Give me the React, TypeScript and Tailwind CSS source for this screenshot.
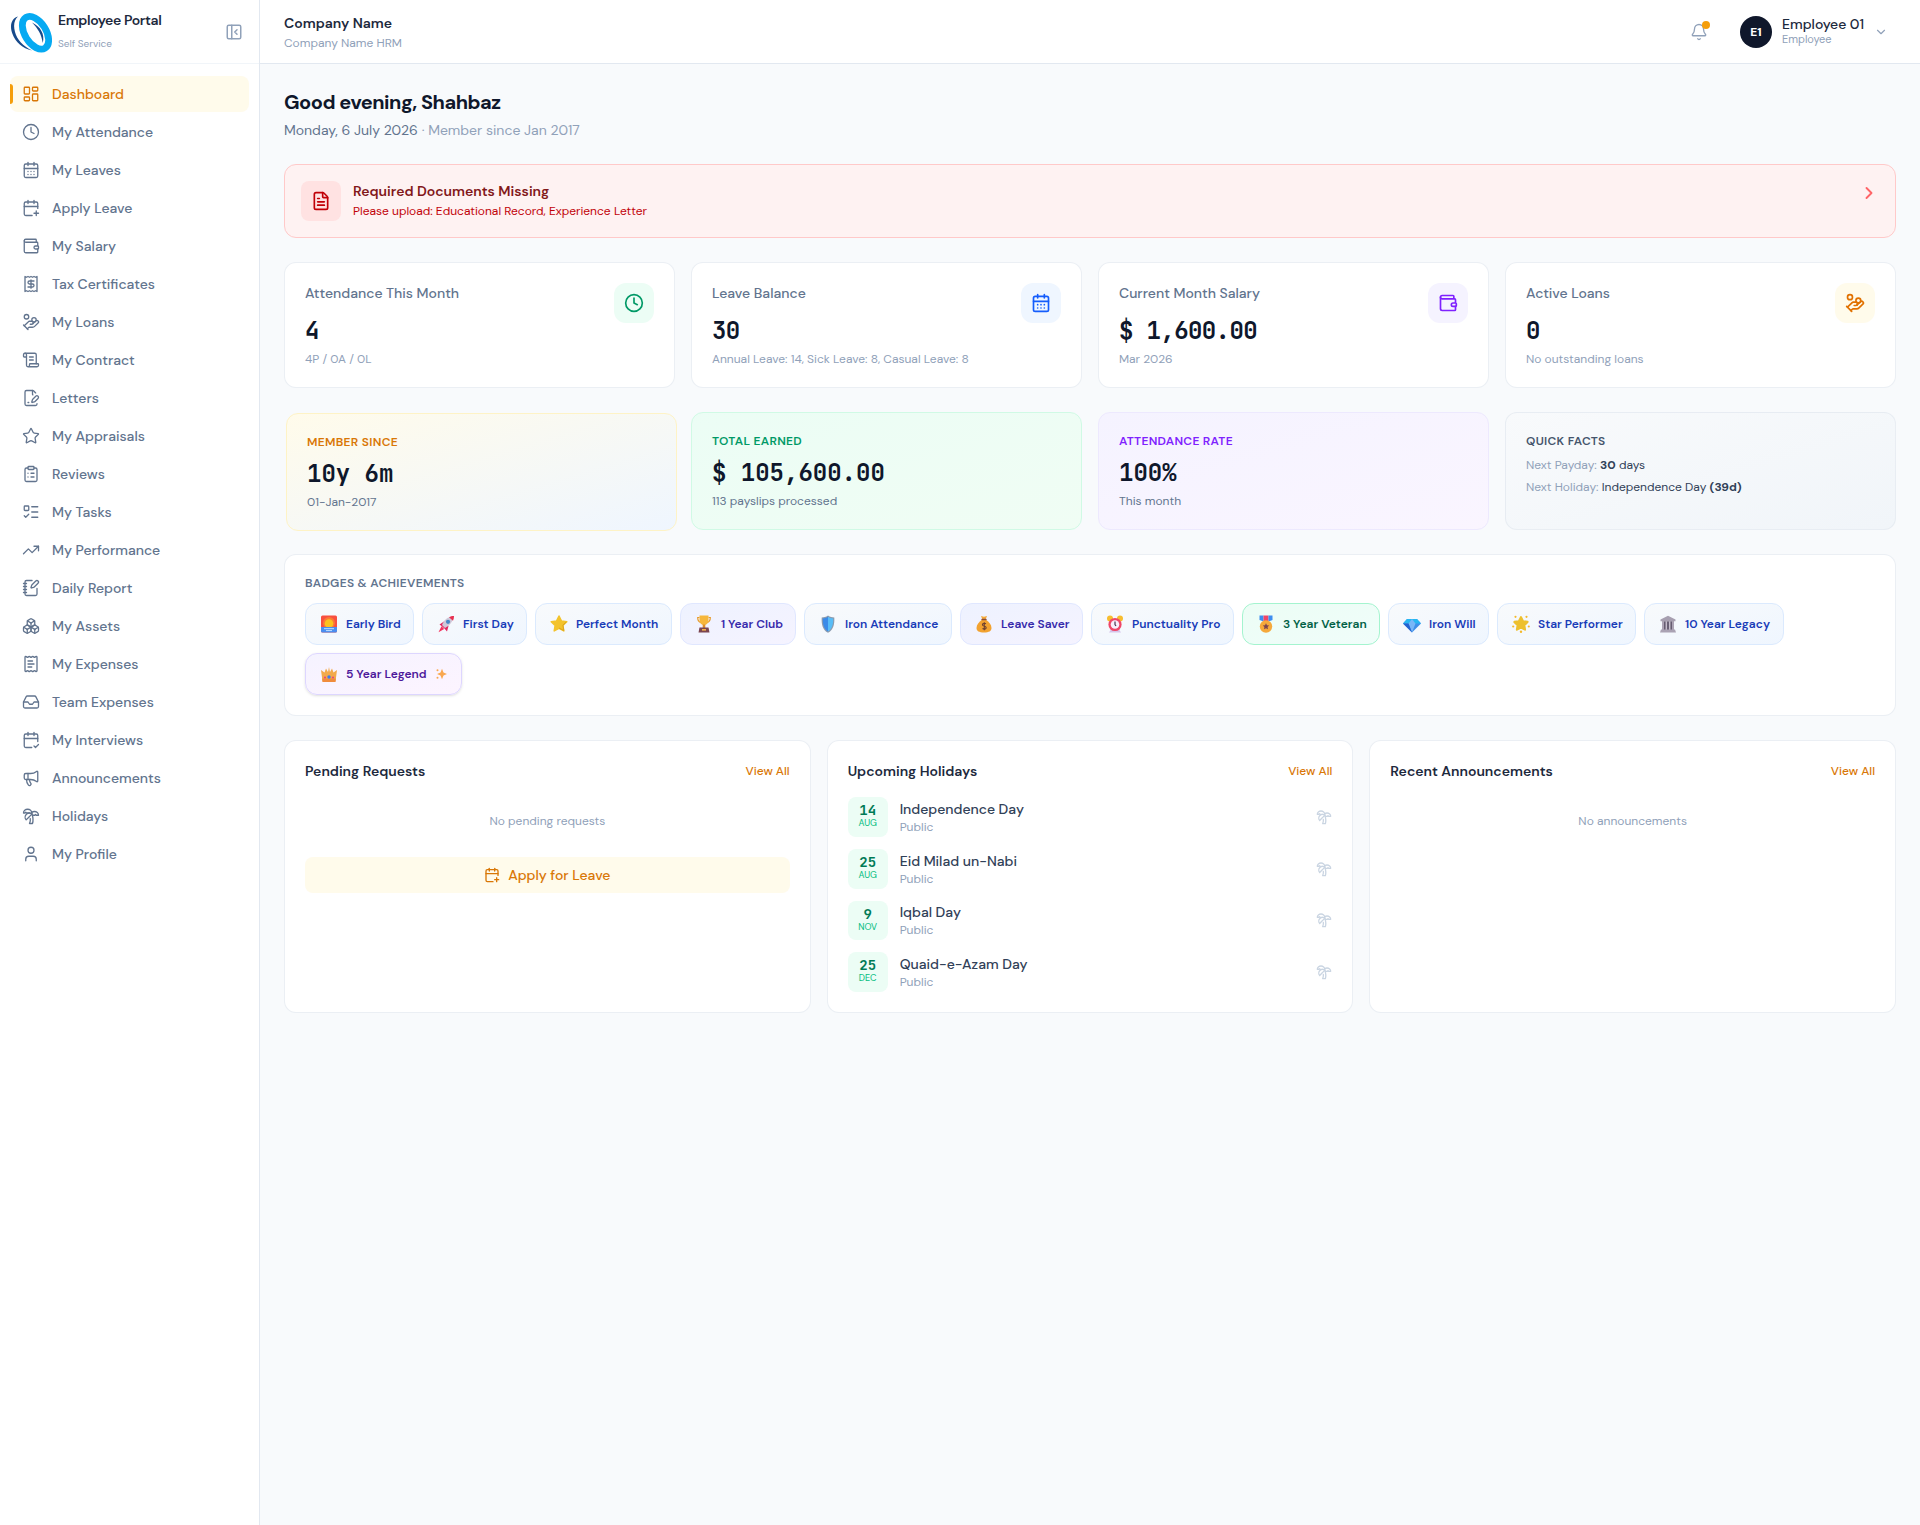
import React from "react";
import {
  Bell,
  Boxes,
  CalendarCheck2,
  CalendarDays,
  CalendarPlus,
  ChevronDown,
  ChevronRight,
  ClipboardList,
  Clock,
  FileText,
  HandCoins,
  Inbox,
  LayoutDashboard,
  ListTodo,
  Megaphone,
  NotebookPen,
  PanelLeftClose,
  Receipt,
  ReceiptText,
  ScrollText,
  Star,
  TreePalm,
  TrendingUp,
  User,
  Wallet,
} from "lucide-react";

const FileSignature = ({
  size = 24,
  strokeWidth = 2,
  className,
}: {
  size?: number;
  strokeWidth?: number;
  className?: string;
}) => (
  <svg
    width={size}
    height={size}
    viewBox="0 0 24 24"
    fill="none"
    stroke="currentColor"
    strokeWidth={strokeWidth}
    strokeLinecap="round"
    strokeLinejoin="round"
    className={className}
  >
    <path d="M14.364 13.634a2 2 0 0 0-.506.854l-.837 2.87a.5.5 0 0 0 .62.62l2.87-.837a2 2 0 0 0 .854-.506l4.013-4.009a1 1 0 0 0-3.004-3.004z" />
    <path d="M14.487 7.858A1 1 0 0 1 14 7V2" />
    <path d="M20 19.645V20a2 2 0 0 1-2 2H6a2 2 0 0 1-2-2V4a2 2 0 0 1 2-2h8a2.4 2.4 0 0 1 1.704.706l2.516 2.516" />
    <path d="M8 18h1" />
  </svg>
);

const navItems = [
  { label: "Dashboard", icon: LayoutDashboard, active: true },
  { label: "My Attendance", icon: Clock },
  { label: "My Leaves", icon: CalendarDays },
  { label: "Apply Leave", icon: CalendarPlus },
  { label: "My Salary", icon: Wallet },
  { label: "Tax Certificates", icon: Receipt },
  { label: "My Loans", icon: HandCoins },
  { label: "My Contract", icon: ScrollText },
  { label: "Letters", icon: FileSignature },
  { label: "My Appraisals", icon: Star },
  { label: "Reviews", icon: ClipboardList },
  { label: "My Tasks", icon: ListTodo },
  { label: "My Performance", icon: TrendingUp },
  { label: "Daily Report", icon: NotebookPen },
  { label: "My Assets", icon: Boxes },
  { label: "My Expenses", icon: ReceiptText },
  { label: "Team Expenses", icon: Inbox },
  { label: "My Interviews", icon: CalendarCheck2 },
  { label: "Announcements", icon: Megaphone },
  { label: "Holidays", icon: TreePalm },
  { label: "My Profile", icon: User },
];

const stats = [
  {
    label: "Attendance This Month",
    value: "4",
    sub: "4P / 0A / 0L",
    icon: Clock,
    tone: "bg-emerald-50 text-emerald-600",
  },
  {
    label: "Leave Balance",
    value: "30",
    sub: "Annual Leave: 14, Sick Leave: 8, Casual Leave: 8",
    icon: CalendarDays,
    tone: "bg-blue-50 text-blue-600",
  },
  {
    label: "Current Month Salary",
    value: "$ 1,600.00",
    sub: "Mar 2026",
    icon: Wallet,
    tone: "bg-violet-50 text-violet-600",
  },
  {
    label: "Active Loans",
    value: "0",
    sub: "No outstanding loans",
    icon: HandCoins,
    tone: "bg-amber-50 text-amber-600",
  },
];

const highlights = [
  {
    label: "Member Since",
    value: "10y 6m",
    sub: "01-Jan-2017",
    card: "translate-x-0.5 translate-y-px border-amber-100 bg-linear-to-br from-amber-50 to-blue-50",
    title: "text-[#d97706]",
  },
  {
    label: "Total Earned",
    value: "$ 105,600.00",
    sub: "113 payslips processed",
    card: "border-emerald-100 bg-linear-to-br from-emerald-50 to-green-50",
    title: "text-emerald-600",
  },
  {
    label: "Attendance Rate",
    value: "100%",
    sub: "This month",
    card: "border-violet-100 bg-linear-to-br from-violet-50 to-purple-50",
    title: "text-violet-600",
  },
];

const blueBadge = "border-blue-100 from-slate-50 to-blue-50 text-blue-800";
const indigoBadge =
  "border-indigo-100 from-indigo-50 to-violet-50 text-indigo-800";

const badges = [
  { name: "Early Bird", art: "sunrise", style: blueBadge, width: "w-[109px]" },
  { name: "First Day", art: "rocket", style: blueBadge, width: "w-[105px]" },
  { name: "Perfect Month", art: "star", style: blueBadge, width: "w-[137px]" },
  { name: "1 Year Club", art: "trophy", style: indigoBadge, width: "w-[116px]" },
  { name: "Iron Attendance", art: "shield", style: blueBadge, width: "w-[148px]" },
  { name: "Leave Saver", art: "moneybag", style: indigoBadge, width: "w-[123px]" },
  { name: "Punctuality Pro", art: "alarm", style: blueBadge, width: "w-[143px]" },
  {
    name: "3 Year Veteran",
    art: "medal",
    style: "border-emerald-200 from-emerald-50 to-teal-50 text-emerald-800",
    width: "w-[138px]",
  },
  { name: "Iron Will", art: "gem", style: blueBadge, width: "w-[101px]" },
  { name: "Star Performer", art: "glowstar", style: blueBadge, width: "w-[139px]" },
  { name: "10 Year Legacy", art: "temple", style: blueBadge, width: "w-[140px]" },
  {
    name: "5 Year Legend",
    art: "crown",
    style:
      "border-violet-200 from-violet-50 to-fuchsia-50 text-violet-900 shadow-sm",
    width: "w-[157px]",
    sparkle: true,
  },
];

const holidays = [
  { day: "14", month: "Aug", name: "Independence Day" },
  { day: "25", month: "Aug", name: "Eid Milad un-Nabi" },
  { day: "9", month: "Nov", name: "Iqbal Day" },
  { day: "25", month: "Dec", name: "Quaid-e-Azam Day" },
];

const starPath =
  "M9 1l2.4 4.9 5.4.8-3.9 3.8.9 5.4L9 13.4l-4.8 2.5.9-5.4L1.2 6.7l5.4-.8z";

const artwork: Record<string, React.ReactNode> = {
  sunrise: (
    <>
      <rect x="1" y="0.5" width="16" height="17" rx="1.5" fill="#f8503f" />
      <circle cx="9" cy="8" r="6" fill="#fb7a35" />
      <circle cx="9" cy="8.5" r="4.3" fill="#fcc21f" />
      <path d="M1 12h16v4a1.5 1.5 0 0 1-1.5 1.5h-13A1.5 1.5 0 0 1 1 16z" fill="#4a8df0" />
      <path d="M4 13.7h10M6 15.6h6" stroke="#bfe0ff" strokeWidth="1" />
    </>
  ),
  rocket: (
    <>
      <path d="M2.5 9.5L7 6.5l4.5 4.5-1.500 5.500-2.500-3-3-2.500z" fill="#e0245e" />
      <path d="M5 10C7 5 10 2 16.500 1c-.5 6-4 9.500-8.500 12z" fill="#cfc8d8" />
      <path d="M12 2.300C13.500 1.500 15 1 17 1c0 1.700-.3 3.300-1 4.700z" fill="#e8304f" />
      <circle cx="11" cy="6.800" r="2.100" fill="#4787c7" />
      <path d="M4.500 11.300L7.200 14 1.500 17.300z" fill="#f5305c" />
    </>
  ),
  star: (
    <>
      <path d={starPath} fill="#f3c32c" stroke="#f3c32c" strokeWidth="1.5" strokeLinejoin="round" />
      <path d="M9 13l4.800 2.500-.9-5.300 3.300-3.300" fill="none" stroke="#dba51f" strokeWidth="1" />
    </>
  ),
  trophy: (
    <>
      <path d="M4.500 2.500H2.700c0 3 1 4.500 3.300 5M13.500 2.500h1.800c0 3-1 4.500-3.300 5" fill="none" stroke="#e79a2b" strokeWidth="1.2" />
      <path d="M4.500.5h9V5c0 3-2 5-4.500 5S4.500 8 4.500 5z" fill="#f6b73c" />
      <path d="M7.700 9.500h2.600V13H7.700z" fill="#df8e2a" />
      <path d="M4.500 12.500h9l1 5h-11z" fill="#7b4550" />
      <rect x="7" y="14" width="4" height="1.6" fill="#f3b14b" />
    </>
  ),
  shield: (
    <>
      <path d="M9 .5c2 1.500 4.200 1.800 6.300 1.900.4 7-1 12.600-6.300 15.300C3.700 15 2.300 9.400 2.700 2.400 4.800 2.300 7 2 9 .5z" fill="#8a9bb0" />
      <path d="M9 1.800v14.600C4.800 14 3.700 9.500 3.800 3.500 5.800 3.400 7.500 2.800 9 1.800z" fill="#3b8be8" />
      <path d="M9 1.800v14.600c4.200-2.400 5.300-6.900 5.200-12.900C12.200 3.400 10.500 2.800 9 1.800z" fill="#58bdf7" />
    </>
  ),
  moneybag: (
    <>
      <path d="M6 1l3 .8L12 1l-1.200 3H7.200z" fill="#f4a93a" />
      <path d="M7 4.800h4c3 2 5.500 5 5.500 8.200 0 3-2.500 4.500-7.500 4.500S1.500 16 1.500 13C1.500 9.800 4 6.800 7 4.800z" fill="#f2a230" />
      <rect x="6.300" y="3.700" width="5.400" height="1.500" rx=".7" fill="#8a4c3a" />
      <path d="M11 8.800c-2.500-1.300-4.500.5-3 1.900.8.700 2.500.5 3 1.500.7 1.700-1.500 2.500-3.500 1.400M9.300 7.300v8" fill="none" stroke="#6d4030" strokeWidth="1.1" />
    </>
  ),
  alarm: (
    <>
      <circle cx="4" cy="3.500" r="3" fill="#f7bd2f" />
      <circle cx="14" cy="3.500" r="3" fill="#f7bd2f" />
      <path d="M3 17.500l2-3h8l2 3z" fill="#d5c4ea" />
      <circle cx="9" cy="9.500" r="6.600" fill="#ef4668" />
      <circle cx="9" cy="9.500" r="4.300" fill="#f7eefb" />
      <path d="M9 6.500v3l1 1.500" fill="none" stroke="#4c3550" strokeWidth="1.2" />
    </>
  ),
  medal: (
    <>
      <path d="M2.500.5h4v6l-4-1.500z" fill="#3d8df0" />
      <path d="M6.500.5h5v6h-5z" fill="#ef4668" />
      <path d="M11.500.5h4V5l-4 1.500z" fill="#3d8df0" />
      <circle cx="9" cy="11.500" r="6.200" fill="#f5a93b" />
      <path d="M9 8.300l1 2 2.200.3-1.600 1.500.4 2.200-2-1-2 1 .4-2.200-1.600-1.500 2.200-.3z" fill="#7b4550" />
    </>
  ),
  gem: (
    <>
      <path d="M4 4h10l4 4.500-9 9-9-9z" fill="#3f8fe8" />
      <path d="M4 4h10l4 4.500H0z" fill="#27b7f2" />
      <path d="M5.500 8.500L9 4l3.500 4.500L9 17.500z" fill="#78b7f8" />
      <path d="M0 8.500h5.500L9 17.500z" fill="#2462d0" />
    </>
  ),
  glowstar: (
    <>
      <path d={starPath} transform="translate(1.4 1.3) scale(.84)" fill="#edc02e" stroke="#edc02e" strokeWidth="2.6" strokeLinejoin="round" />
      <g fill="#f4b92c">
        <circle cx="3.500" cy="1.800" r="1.100" />
        <circle cx="14.500" cy="1.800" r="1.100" />
        <circle cx="1.200" cy="11.500" r="1.100" />
        <circle cx="16.800" cy="11.500" r="1.100" />
        <circle cx="9" cy="16.800" r="1.200" />
      </g>
    </>
  ),
  temple: (
    <>
      <path d="M9 .8l7.500 3.700v1.800h-15V4.500z" fill="#a79fb0" />
      <path d="M3 6.300h12V15H3z" fill="#655b70" />
      <path d="M4 6.300v9M7.300 6.300v9M10.700 6.300v9M14 6.300v9" stroke="#c4bccb" strokeWidth="1.5" />
      <path d="M2 14.500h14l1 3H1z" fill="#aaa2b3" />
    </>
  ),
  crown: (
    <>
      <path d="M1 5l3.500 2.500L6 3.500 8 7l1-5 1 5 2-3.500 1.500 4L17 5l-1.500 11.500h-13z" fill="#f2aa4b" />
      <path d="M2.200 13.500h13.600l-.3 3.500h-13z" fill="#f08c3c" />
      <circle cx="9" cy="12" r="1.700" fill="#3d7be8" />
      <circle cx="5" cy="12.500" r="1.100" fill="#e8467c" />
      <circle cx="13" cy="12.500" r="1.100" fill="#e8467c" />
    </>
  ),
};

const Sidebar = () => (
  <aside className="w-[260px] shrink-0 border-r border-slate-200 bg-white">
    <div className="flex h-16 items-center border-b border-slate-100 pr-4 pl-2.5">
      <svg className="size-[42px] shrink-0" viewBox="0 0 42 42">
        <path
          d="M8 5.500C2 7-1 14 2.500 23c3 8 10 14.500 19.500 16.500C13 35 7 28.500 5 21 3 14 4.500 8.500 8 5.500z"
          fill="#174a8b"
        />
        <ellipse
          cx="25.500"
          cy="21.800"
          rx="10.600"
          ry="18.100"
          transform="rotate(-32 25.5 21.8)"
          fill="none"
          stroke="#06aaf2"
          strokeWidth="6.8"
        />
        <path
          d="M22 11.500c8.500 4 13 11.500 10.800 20.500-1.300-8.500-4.800-14.500-10.800-20.500z"
          fill="#174a8b"
        />
      </svg>
      <div className="ml-1.5 flex-1">
        <p className="text-sm leading-5 font-semibold tracking-tight text-slate-800">
          Employee Portal
        </p>
        <p className="mt-1 text-[10px] leading-5 text-slate-400">
          Self Service
        </p>
      </div>
      <PanelLeftClose size={18} className="text-slate-400" />
    </div>

    <nav className="flex flex-col gap-0.5 px-2.5 py-3">
      {navItems.map(({ label, icon: Icon, active }) => (
        <a
          key={label}
          className={
            active
              ? "relative flex h-9 items-center gap-3 rounded-lg bg-amber-50 px-3 text-sm font-medium text-[#d97706]"
              : "relative flex h-9 items-center gap-3 rounded-lg px-3 text-sm font-medium text-slate-500"
          }
        >
          {active && (
            <span className="absolute top-2 left-0 h-5 w-[3px] rounded-r-full bg-[#f59e0b]" />
          )}
          <Icon size={18} strokeWidth={1.75} className="shrink-0" />
          <span>{label}</span>
        </a>
      ))}
    </nav>
  </aside>
);

const Header = () => (
  <header className="flex h-16 items-center justify-between border-b border-slate-200 bg-white px-6">
    <div>
      <p className="text-sm font-semibold text-slate-800">Company Name</p>
      <p className="mt-0.5 text-xs text-slate-400">Company Name HRM</p>
    </div>
    <div className="flex items-center">
      <div className="relative mr-8 text-slate-400">
        <Bell size={18} strokeWidth={1.75} />
        <span className="absolute -top-[2px] -right-[2px] size-2 rounded-full bg-[#f59e0b]" />
      </div>
      <div className="flex size-8 items-center justify-center rounded-full bg-slate-900 text-xs font-bold text-white">
        E1
      </div>
      <div className="ml-2.5 w-[82px] pb-0.5">
        <p className="text-sm leading-[17px] font-medium whitespace-nowrap text-slate-800">
          Employee 01
        </p>
        <p className="text-[11px] leading-[13px] text-slate-400">Employee</p>
      </div>
      <ChevronDown size={14} className="mr-2 ml-2.5 text-slate-400" />
    </div>
  </header>
);

const PanelHeader = ({ title }: { title: string }) => (
  <div className="mb-4 flex items-center justify-between">
    <h3 className="text-sm font-semibold text-slate-800">{title}</h3>
    <a className="text-xs font-medium text-[#d97706]">View All</a>
  </div>
);

const App = () => {
  return (
    <div className="flex min-h-[1525px] bg-slate-50 font-['DM_Sans',Inter,sans-serif]">
      <Sidebar />
      <div className="min-w-0 flex-1">
        <Header />
        <main className="space-y-6 p-6">
          {/* Greeting */}
          <div>
            <h1 className="text-xl font-bold tracking-tight text-slate-900">
              Good evening, Shahbaz
            </h1>
            <p className="mt-1 text-sm text-slate-500">
              Monday, 6 July 2026{" "}
              <span className="text-slate-400">· Member since Jan 2017</span>
            </p>
          </div>

          {/* Missing documents alert */}
          <div className="flex items-start gap-3 rounded-xl border border-red-200 bg-red-50 p-4">
            <div className="flex size-10 items-center justify-center rounded-lg bg-red-100 text-red-700">
              <FileText size={20} />
            </div>
            <div className="flex-1">
              <p className="text-sm font-semibold text-red-900">
                Required Documents Missing
              </p>
              <p className="mt-0.5 text-xs text-red-700">
                Please upload: Educational Record, Experience Letter
              </p>
            </div>
            <ChevronRight
              size={20}
              strokeWidth={2.25}
              className="mt-0.5 text-red-400"
            />
          </div>

          {/* Stats */}
          <div className="grid grid-cols-4 gap-4">
            {stats.map(({ label, value, sub, icon: Icon, tone }) => (
              <div
                key={label}
                className="flex items-start justify-between rounded-xl border border-slate-200/70 bg-white p-5"
              >
                <div>
                  <p className="text-sm font-medium text-slate-500">{label}</p>
                  <p className="mt-3 font-['JetBrains_Mono','Liberation_Mono',monospace] text-2xl font-semibold tracking-tight text-slate-900">
                    {value}
                  </p>
                  <p className="mt-1 text-xs text-slate-400">{sub}</p>
                </div>
                <div
                  className={`flex size-10 items-center justify-center rounded-xl ${tone}`}
                >
                  <Icon size={20} />
                </div>
              </div>
            ))}
          </div>

          {/* Highlights */}
          <div className="grid grid-cols-4 gap-4">
            {highlights.map((item) => (
              <div
                key={item.label}
                className={`rounded-xl border p-5 ${item.card}`}
              >
                <p
                  className={`text-xs font-semibold tracking-wide uppercase ${item.title}`}
                >
                  {item.label}
                </p>
                <p className="mt-2 font-['JetBrains_Mono','Liberation_Mono',monospace] text-2xl font-semibold text-slate-900">
                  {item.value}
                </p>
                <p className="mt-1 text-xs text-slate-500">{item.sub}</p>
              </div>
            ))}
            <div className="rounded-xl border border-slate-200/70 bg-linear-to-br from-slate-50 to-slate-100 p-5">
              <p className="text-xs font-semibold tracking-wide text-slate-600 uppercase">
                Quick Facts
              </p>
              <div className="mt-2 space-y-1.5 text-xs text-slate-700">
                <p>
                  <span className="text-slate-400">Next Payday:</span>{" "}
                  <b className="font-bold">30</b> days
                </p>
                <p>
                  <span className="text-slate-400">Next Holiday:</span>{" "}
                  Independence Day <b className="font-bold">(39d)</b>
                </p>
              </div>
            </div>
          </div>

          {/* Badges */}
          <div className="rounded-xl border border-slate-200/70 bg-white p-5">
            <h3 className="mb-3 text-xs font-semibold tracking-wide text-slate-500 uppercase">
              Badges &amp; Achievements
            </h3>
            <div className="flex flex-wrap gap-2">
              {badges.map((badge) => (
                <div
                  key={badge.name}
                  className={`flex h-[42px] items-center gap-2 rounded-xl border bg-linear-to-br pl-3.5 text-xs font-semibold whitespace-nowrap ${badge.style} ${badge.width}`}
                >
                  <svg className="size-[18px] shrink-0" viewBox="0 0 18 18">
                    {artwork[badge.art]}
                  </svg>
                  <span>{badge.name}</span>
                  {badge.sparkle && (
                    <svg
                      className="size-3 shrink-0"
                      viewBox="0 0 12 12"
                      fill="#f9a850"
                    >
                      <path d="M7 .8l1.500 3.700L12 6 8.500 7.500 7 11.200 5.500 7.500 2 6l3.500-1.500z" />
                      <circle cx="2.500" cy="2.300" r="1" />
                      <circle cx="2.500" cy="9.700" r="1" />
                    </svg>
                  )}
                </div>
              ))}
            </div>
          </div>

          {/* Panels */}
          <div className="grid grid-cols-3 gap-4">
            <div className="rounded-xl border border-slate-200/70 bg-white p-5">
              <PanelHeader title="Pending Requests" />
              <p className="py-4 text-center text-xs text-slate-400">
                No pending requests
              </p>
              <button className="mt-3 flex w-full items-center justify-center gap-2 rounded-lg bg-amber-50 py-2 text-sm font-medium text-[#d97706]">
                <CalendarPlus size={16} />
                Apply for Leave
              </button>
            </div>

            <div className="rounded-xl border border-slate-200/70 bg-white p-5">
              <PanelHeader title="Upcoming Holidays" />
              <div className="space-y-3">
                {holidays.map((holiday) => (
                  <div
                    key={holiday.name}
                    className="flex h-[39.75px] items-center gap-3"
                  >
                    <div className="flex h-full w-10 flex-col items-center rounded-lg bg-emerald-50 pt-1.5">
                      <span className="font-['JetBrains_Mono','Liberation_Mono',monospace] text-sm leading-none font-bold text-emerald-700">
                        {holiday.day}
                      </span>
                      <span className="text-[9px] leading-[13.5px] text-emerald-500 uppercase">
                        {holiday.month}
                      </span>
                    </div>
                    <div className="flex-1">
                      <p className="text-sm font-medium text-slate-700">
                        {holiday.name}
                      </p>
                      <p className="text-xs text-slate-400">Public</p>
                    </div>
                    <TreePalm size={16} className="text-slate-300" />
                  </div>
                ))}
              </div>
            </div>

            <div className="rounded-xl border border-slate-200/70 bg-white p-5">
              <PanelHeader title="Recent Announcements" />
              <p className="py-4 text-center text-xs text-slate-400">
                No announcements
              </p>
            </div>
          </div>
        </main>
      </div>
    </div>
  );
};

export default App;
